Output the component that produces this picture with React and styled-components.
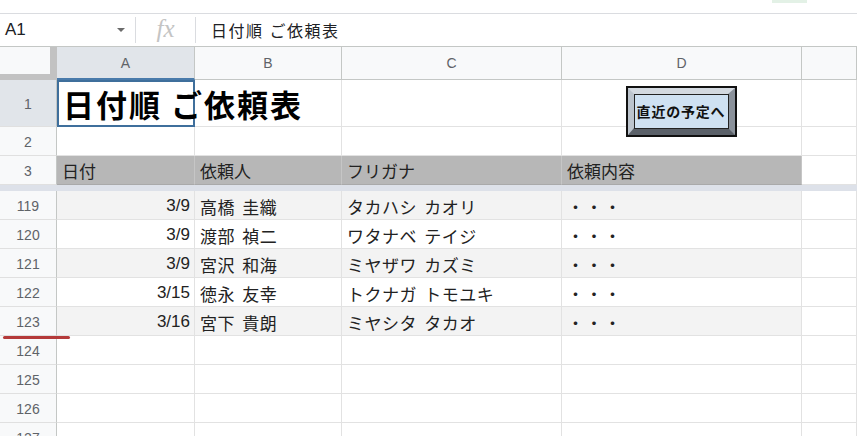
import React from 'react'
import styled, { createGlobalStyle } from 'styled-components'

const GlobalStyle = createGlobalStyle`
  html, body {
    margin: 0;
    padding: 0;
    background: #fff;
    overflow: hidden;
  }
  * {
    box-sizing: border-box;
  }
`

const JP = `"Liberation Sans", "Noto Sans CJK JP", sans-serif`

const rows = [
  { n: 119, date: '3/9', name: '高橋 圭織', kana: 'タカハシ カオリ', shade: true },
  { n: 120, date: '3/9', name: '渡部 禎二', kana: 'ワタナベ テイジ' },
  { n: 121, date: '3/9', name: '宮沢 和海', kana: 'ミヤザワ カズミ', shade: true },
  { n: 122, date: '3/15', name: '徳永 友幸', kana: 'トクナガ トモユキ' },
  { n: 123, date: '3/16', name: '宮下 貴朗', kana: 'ミヤシタ タカオ', shade: true },
]

const emptyRows = [124, 125, 126, 127, 128]

export default function App() {
  return (
    <Page>
      <GlobalStyle />
      <TopStrip>
        <GreenTab />
      </TopStrip>

      <FormulaBar>
        <NameBox>
          <span>A1</span>
          <Caret />
        </NameBox>
        <FxBox>fx</FxBox>
        <FormulaText>日付順 ご依頼表</FormulaText>
      </FormulaBar>

      <Sheet>
        <Corner />
        <ColHead $active>A</ColHead>
        <ColHead>B</ColHead>
        <ColHead>C</ColHead>
        <ColHead>D</ColHead>
        <ColHead />

        <RowHead $active>1</RowHead>
        <TitleCell>日付順 ご依頼表</TitleCell>
        <Cell $open />
        <Cell />
        <Cell />
        <Cell />

        <RowHead>2</RowHead>
        <Cell />
        <Cell />
        <Cell />
        <Cell />
        <Cell />

        <RowHead>3</RowHead>
        <HeadCell>日付</HeadCell>
        <HeadCell>依頼人</HeadCell>
        <HeadCell>フリガナ</HeadCell>
        <HeadCell>依頼内容</HeadCell>
        <Cell />

        <FreezeBand />

        {rows.map(r => (
          <React.Fragment key={r.n}>
            <RowHead>{r.n}</RowHead>
            <Cell $shade={r.shade} $right>{r.date}</Cell>
            <Cell $shade={r.shade} $jp>{r.name}</Cell>
            <Cell $shade={r.shade} $jp>{r.kana}</Cell>
            <Cell $shade={r.shade}><Dots>・・・</Dots></Cell>
            <Cell />
          </React.Fragment>
        ))}

        {emptyRows.map(n => (
          <React.Fragment key={n}>
            <RowHead>{n}</RowHead>
            <Cell />
            <Cell />
            <Cell />
            <Cell />
            <Cell />
          </React.Fragment>
        ))}

        <BevelButton>
          <ButtonFace>直近の予定へ</ButtonFace>
        </BevelButton>
      </Sheet>

      <RedMark />
    </Page>
  )
}

const Page = styled.div`
  position: relative;
  width: 857px;
  height: 436px;
  overflow: hidden;
  font-family: ${JP};
`

const TopStrip = styled.div`
  position: relative;
  height: 14px;
  border-bottom: 1px solid #dadce0;
`

const GreenTab = styled.div`
  position: absolute;
  left: 772px;
  top: 0;
  width: 35px;
  height: 3px;
  background: #e3f1e6;
`

const FormulaBar = styled.div`
  display: flex;
  align-items: stretch;
  height: 32px;
`

const NameBox = styled.div`
  width: 136px;
  display: flex;
  align-items: center;
  justify-content: space-between;
  padding: 0 10px 0 5px;
  margin: 3px 0;
  border-right: 1px solid #dadce0;
  font-family: "Liberation Sans", Arial, sans-serif;
  font-size: 17px;
  color: #202124;
`

const Caret = styled.div`
  width: 0;
  height: 0;
  border-left: 4px solid transparent;
  border-right: 4px solid transparent;
  border-top: 4px solid #6b6b6b;
`

const FxBox = styled.div`
  width: 60px;
  display: flex;
  align-items: center;
  justify-content: center;
  margin: 3px 0;
  border-right: 1px solid #dadce0;
  font-family: "Liberation Serif", serif;
  font-style: italic;
  font-size: 25px;
  color: #c4c4c4;
  padding-bottom: 3px;
`

const FormulaText = styled.div`
  display: flex;
  align-items: center;
  padding-left: 15px;
  font-size: 16px;
  letter-spacing: 1.5px;
  color: #202124;
`

const Sheet = styled.div`
  position: relative;
  display: grid;
  grid-template-columns: 57px 138px 147px 220px 240px 55px;
  grid-template-rows: 33px 47px 29px 29px 6px;
  grid-auto-rows: 29px;
  border-top: 1px solid #c4c7c5;
`

const Corner = styled.div`
  background: #f8f9fa;
  border-right: 7px solid #c2c2c2;
  border-bottom: 6px solid #c2c2c2;
`

const ColHead = styled.div`
  display: flex;
  align-items: center;
  justify-content: center;
  background: ${p => (p.$active ? '#e1e5ea' : '#f8f9fa')};
  border-right: 1px solid #c4c7c5;
  border-bottom: ${p => (p.$active ? '2px solid #4a7bab' : '1px solid #c4c7c5')};
  font-family: "Liberation Sans", Arial, sans-serif;
  font-size: 14px;
  color: #5f6368;
`

const RowHead = styled.div`
  display: flex;
  align-items: center;
  justify-content: center;
  padding-top: 2px;
  background: ${p => (p.$active ? '#e1e5ea' : '#f8f9fa')};
  border-right: 1px solid #c4c7c5;
  border-bottom: 1px solid #e0e0e0;
  font-family: "Liberation Sans", Arial, sans-serif;
  font-size: 14px;
  color: #5f6368;
`

const Cell = styled.div`
  display: flex;
  align-items: center;
  justify-content: ${p => (p.$right ? 'flex-end' : 'flex-start')};
  padding: 2px ${p => (p.$right ? '4px' : '5px')} 0 5px;
  background: ${p => (p.$shade ? '#f3f3f3' : p.$open ? 'transparent' : '#fff')};
  border-right: 1px solid #e2e2e2;
  border-bottom: 1px solid #e2e2e2;
  font-size: 17px;
  letter-spacing: ${p => (p.$jp ? '0.5px' : '0')};
  word-spacing: ${p => (p.$jp ? '2px' : '0')};
  color: #222;
  white-space: nowrap;
`

const TitleCell = styled.div`
  position: relative;
  z-index: 1;
  display: flex;
  align-items: center;
  padding-left: 6px;
  box-shadow: inset 0 0 0 2px #3f6f9c;
  font-family: "Noto Sans CJK JP", sans-serif;
  font-size: 31px;
  font-weight: 700;
  letter-spacing: 2px;
  color: #000;
  white-space: nowrap;
`

const HeadCell = styled.div`
  display: flex;
  align-items: center;
  padding: 1px 5px 0;
  background: #b7b7b7;
  border-right: 1px solid #c6c6c6;
  border-bottom: 1px solid #a9a9a9;
  font-size: 17px;
  color: #222;
  white-space: nowrap;
`

const FreezeBand = styled.div`
  grid-column: 1 / -1;
  background: #dde1e9;
`

const Dots = styled.span`
  letter-spacing: 1.5px;
`

const BevelButton = styled.div`
  position: absolute;
  left: 626px;
  top: 39px;
  width: 111px;
  height: 51px;
  border: 2px solid #111;
  display: flex;
`

const ButtonFace = styled.div`
  flex: 1;
  display: flex;
  align-items: center;
  justify-content: center;
  border-style: solid;
  border-width: 6px 7px 7px 6px;
  border-color: #d3d9e0 #8a919a #5b6169 #bcc4cd;
  outline: 1px solid #222;
  outline-offset: -7px;
  background: #cfe1f2;
  font-family: "Noto Sans CJK JP", sans-serif;
  font-size: 14px;
  font-weight: 700;
  letter-spacing: 0.8px;
  color: #111;
  padding-bottom: 1px;
`

const RedMark = styled.div`
  position: absolute;
  left: 3px;
  top: 336px;
  width: 67px;
  height: 3px;
  border-radius: 2px;
  background: #b43a3a;
`
